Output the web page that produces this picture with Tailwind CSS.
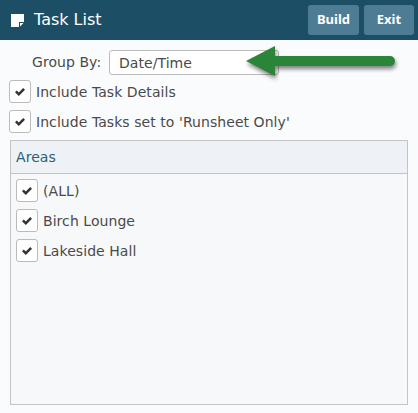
<!DOCTYPE html>
<html lang="en">
<head>
    <meta charset="UTF-8">
    <title>Task List</title>
    <script src="https://cdn.jsdelivr.net/npm/@tailwindcss/browser@4"></script>
</head>
<body class="relative w-[418px] h-[413px] overflow-hidden bg-[#fafbfd] font-['DejaVu_Sans',sans-serif] text-[14px] tracking-[0.06px] text-[#4a4a4a]">
    <header class="flex items-center h-[40px] bg-[#1c4f66] pl-[11px] pr-[4px]">
        <svg class="w-[13px] h-[13px] mr-[10px]" viewBox="0 0 13 13"><path fill="#fff" d="M0 0h13v8.500l-4.500 4.500H0z"/><path fill="#1c4f66" d="M8 13V8h5v1H9v4z"/></svg>
        <h1 class="text-[16px] tracking-normal text-white">Task List</h1>
        <button class="ml-auto h-[30px] w-[51px] rounded-[3px] bg-[#4f7c95] font-['Noto_Sans',sans-serif] text-[13px] font-bold tracking-normal text-white">Build</button>
        <button class="ml-[5px] h-[30px] w-[50px] rounded-[3px] bg-[#4f7c95] font-['Noto_Sans',sans-serif] text-[13px] font-bold tracking-normal text-white">Exit</button>
    </header>
    <div class="flex items-center h-[25px] mt-[10px] pl-[32px]">
        <label class="w-[77px]">Group By:</label>
        <div class="flex items-center w-[170px] h-[25px] pl-[9px] pt-[1px] rounded-[3px] border border-[#bbb] bg-white">Date/Time</div>
    </div>
    <div class="flex items-center gap-[5px] h-[23px] mt-[5px] pl-[9px]">
        <span class="flex items-center justify-center w-[22px] h-[23px] rounded-[3px] border border-[#bbb] bg-white"><svg class="w-[10px] h-[8px]" viewBox="0 0 10 8"><path fill="#333" d="M0 4.200l1.800-1.700 2 1.900L8.200 0 10 1.800 3.800 8z"/></svg></span>
        <span class="pt-[1px]">Include Task Details</span>
    </div>
    <div class="flex items-center gap-[5px] h-[23px] mt-[7px] pl-[9px]">
        <span class="flex items-center justify-center w-[22px] h-[23px] rounded-[3px] border border-[#bbb] bg-white"><svg class="w-[10px] h-[8px]" viewBox="0 0 10 8"><path fill="#333" d="M0 4.200l1.800-1.700 2 1.900L8.200 0 10 1.800 3.800 8z"/></svg></span>
        <span class="pt-[1px]">Include Tasks set to 'Runsheet Only'</span>
    </div>
    <section class="mt-[7px] mx-[10px] h-[265px] border border-[#c4c4c4] bg-[#f7f8fa]">
        <div class="flex items-center h-[33px] pl-[5px] border-b border-[#c4c4c4] bg-[#eef1f5] text-[#2c5f7a]">Areas</div>
        <ul class="pl-[5px] pt-[5px]">
            <li class="flex items-center gap-[5px] h-[23px] mb-[7px]"><span class="flex items-center justify-center w-[22px] h-[23px] rounded-[3px] border border-[#bbb] bg-white"><svg class="w-[10px] h-[8px]" viewBox="0 0 10 8"><path fill="#333" d="M0 4.200l1.800-1.700 2 1.900L8.200 0 10 1.800 3.800 8z"/></svg></span><span class="pt-[1px]">(ALL)</span></li>
            <li class="flex items-center gap-[5px] h-[23px] mb-[7px]"><span class="flex items-center justify-center w-[22px] h-[23px] rounded-[3px] border border-[#bbb] bg-white"><svg class="w-[10px] h-[8px]" viewBox="0 0 10 8"><path fill="#333" d="M0 4.200l1.800-1.700 2 1.900L8.200 0 10 1.800 3.800 8z"/></svg></span><span class="pt-[1px]">Birch Lounge</span></li>
            <li class="flex items-center gap-[5px] h-[23px]"><span class="flex items-center justify-center w-[22px] h-[23px] rounded-[3px] border border-[#bbb] bg-white"><svg class="w-[10px] h-[8px]" viewBox="0 0 10 8"><path fill="#333" d="M0 4.200l1.800-1.700 2 1.900L8.200 0 10 1.800 3.800 8z"/></svg></span><span class="pt-[1px]">Lakeside Hall</span></li>
        </ul>
    </section>
    <svg class="absolute left-[240px] top-[40px] w-[165px] h-[45px] drop-shadow-[1px_3px_2px_rgba(0,0,0,0.5)]" viewBox="0 0 165 45">
        <path fill="#2a8538" d="M6 21L35 6v10h115a5 5 0 0 1 0 10H35v10z"/>
    </svg>
</body>
</html>
